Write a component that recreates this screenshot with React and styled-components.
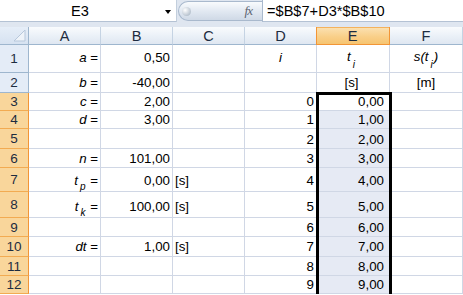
import React from 'react';
import styled, { createGlobalStyle } from 'styled-components';

const GlobalStyle = createGlobalStyle`
  html, body { margin: 0; padding: 0; background: #fff; overflow: hidden; }
  body { font-family: "Liberation Sans", Arial, sans-serif; color: #000; }
`;

const Window = styled.div`
  width: 463px;
  height: 295px;
  overflow: hidden;
  background: #fff;
`;

const TopBar = styled.div`
  display: flex;
  align-items: flex-start;
  height: 27px;
  background: #dfe6f0;
`;

const NameBox = styled.div`
  box-sizing: border-box;
  width: 177px;
  height: 22px;
  display: flex;
  align-items: center;
  justify-content: center;
  padding-right: 16px;
  background: #fff;
  border-right: 1px solid #c3cfdd;
  border-bottom: 1px solid #b4c2d4;
  font-size: 14.6px;
  position: relative;
`;

const Arrow = styled.span`
  position: absolute;
  right: 5px;
  top: 10px;
  width: 0;
  height: 0;
  border-left: 3.5px solid transparent;
  border-right: 3.5px solid transparent;
  border-top: 4px solid #000;
`;

const FxPill = styled.div`
  box-sizing: border-box;
  width: 84px;
  height: 20px;
  margin: 1px 0 0 1px;
  display: flex;
  align-items: center;
  justify-content: space-between;
  padding: 0 10px 0 3px;
  border: 1px solid #a9b9cd;
  border-right: none;
  border-radius: 10px 0 0 10px;
  background: linear-gradient(#f9fbfd, #e2e9f2 50%, #cfd9e6);
`;

const Grip = styled.span`
  width: 9px;
  height: 9px;
  border-radius: 50%;
  background: radial-gradient(circle at 35% 35%, #ffffff, #b9c4d0 70%, #9aa8b8);
`;

const FxLabel = styled.span`
  font-family: "Liberation Serif", "Times New Roman", serif;
  font-style: italic;
  font-size: 13px;
  color: #5c6470;
  letter-spacing: -1px;
`;

const FormulaInput = styled.div`
  box-sizing: border-box;
  flex: 1;
  height: 22px;
  padding-left: 4px;
  background: #fff;
  border-left: 1px solid #a9b9cd;
  border-bottom: 1px solid #b4c2d4;
  font-size: 14.6px;
  line-height: 22px;
  white-space: nowrap;
`;

const Sheet = styled.div`
  display: grid;
  grid-template-columns: 29px 72px 72px 72px 72px 73px 73px;
  grid-template-rows: ${(p) => p.$rows};
`;

const Corner = styled.div`
  box-sizing: border-box;
  grid-column: 1;
  grid-row: 1;
  background: linear-gradient(#e6eef8, #d6e2f1);
  border-right: 1px solid #9eb6ce;
  border-bottom: 1px solid #9eb6ce;
  display: flex;
  align-items: flex-end;
  justify-content: flex-end;
  padding: 0 2px 2px 0;
`;

const ColHead = styled.div`
  box-sizing: border-box;
  grid-column: ${(p) => p.$col};
  grid-row: 1;
  display: flex;
  align-items: center;
  justify-content: center;
  font-size: 14.6px;
  color: #1d2c40;
  background: ${(p) =>
    p.$sel
      ? 'linear-gradient(#fbe2b4, #f9d08a 55%, #f6c471)'
      : 'linear-gradient(#f9fbfd, #eaf0f7 55%, #dfe7f1)'};
  border-right: 1px solid ${(p) => (p.$sel ? '#f29536' : '#c5d3e3')};
  border-bottom: 1px solid ${(p) => (p.$sel ? '#f29536' : '#9eb6ce')};
  ${(p) => p.$sel && 'box-shadow: inset 1px 0 0 #f29536, inset 0 1px 0 #f4b25c; margin-left: -1px;'}
`;

const RowHead = styled.div`
  box-sizing: border-box;
  grid-column: 1;
  grid-row: ${(p) => p.$row};
  display: flex;
  align-items: center;
  justify-content: center;
  font-size: 13.5px;
  color: #1d2c40;
  background: ${(p) => (p.$sel ? '#f9d69b' : '#e4ecf7')};
  border-right: 1px solid ${(p) => (p.$sel ? '#f29536' : '#9eb6ce')};
  border-bottom: 1px solid ${(p) => (p.$sel ? '#f2ab52' : '#9eb6ce')};
`;

const Cell = styled.div`
  box-sizing: border-box;
  grid-column: ${(p) => p.$col};
  grid-row: ${(p) => p.$row};
  display: flex;
  align-items: flex-end;
  justify-content: ${(p) =>
    p.$align === 'left' ? 'flex-start' : p.$align === 'center' ? 'center' : 'flex-end'};
  padding: 0 ${(p) => p.$pr}px ${(p) => p.$pb}px 2px;
  font-size: 13.3px;
  line-height: 15px;
  white-space: nowrap;
  background: ${(p) => (p.$shade ? '#e6eaf4' : '#fff')};
  border-right: 1px solid #d0d7e5;
  border-bottom: 1px solid #d0d7e5;
`;

const Text = styled.span`
  white-space: pre;
`;

const Selection = styled.div`
  box-sizing: border-box;
  grid-column: ${(p) => p.$col};
  grid-row: ${(p) => p.$from} / ${(p) => p.$to};
  margin: -1px -2px 0 -1px;
  border: 3px solid #000;
  border-bottom: none;
  pointer-events: none;
  z-index: 1;
`;

const I = styled.i`
  font-style: italic;
`;

const Sub = styled.span`
  font-size: 10px;
  line-height: 0;
  vertical-align: -${(p) => p.$d}px;
  margin: 0 1px 0 2px;
`;

const cols = ['A', 'B', 'C', 'D', 'E', 'F'];

const rows = [
  {
    h: 28, pb: 7,
    A: <><I>a</I>{' ='}</>, B: '0,50',
    D: { c: <I>i</I>, align: 'center' },
    E: { c: <><I>t</I><Sub $d={7}><I>i</I></Sub></>, align: 'center' },
    F: { c: <I>s(t<Sub $d={7}>i</Sub>)</I>, align: 'center' },
  },
  { h: 20, pb: 2, A: <><I>b</I>{' ='}</>, B: '-40,00', E: { c: '[s]', align: 'center' }, F: { c: '[m]', align: 'center' } },
  { h: 18, pb: 1, A: <><I>c</I>{' ='}</>, B: '2,00', D: '0', E: '0,00' },
  { h: 18, pb: 1, A: <><I>d</I>{' ='}</>, B: '3,00', D: '1', E: '1,00' },
  { h: 20, pb: 1, D: '2', E: '2,00' },
  { h: 19, pb: 1, A: <><I>n</I>{' ='}</>, B: '101,00', D: '3', E: '3,00' },
  { h: 24, pb: 3, A: <><I>t</I><Sub $d={5}><I>p</I></Sub>{' ='}</>, B: '0,00', C: { c: '[s]', align: 'left' }, D: '4', E: '4,00' },
  { h: 26, pb: 3, A: <><I>t</I><Sub $d={5}><I>k</I></Sub>{' ='}</>, B: '100,00', C: { c: '[s]', align: 'left' }, D: '5', E: '5,00' },
  { h: 19, pb: 1, D: '6', E: '6,00' },
  { h: 20, pb: 2, A: <><I>dt</I>{' ='}</>, B: '1,00', C: { c: '[s]', align: 'left' }, D: '7', E: '7,00' },
  { h: 19, pb: 1, D: '8', E: '8,00' },
  { h: 18, pb: 1, D: '9', E: '9,00' },
];

function readCell(v) {
  if (v === undefined) return { c: null, align: 'right' };
  if (typeof v === 'object' && v !== null && 'c' in v) return v;
  return { c: v, align: 'right' };
}

export default function App() {
  const template = ['18px', ...rows.map((r) => `${r.h}px`)].join(' ');

  return (
    <Window>
      <GlobalStyle />
      <TopBar>
        <NameBox>
          E3
          <Arrow />
        </NameBox>
        <FxPill>
          <Grip />
          <FxLabel>fx</FxLabel>
        </FxPill>
        <FormulaInput>=$B$7+D3*$B$10</FormulaInput>
      </TopBar>

      <Sheet $rows={template}>
        <Corner>
          <svg width="12" height="12" viewBox="0 0 12 12">
            <polygon points="11,0 11,11 0,11" fill="#eef3f9" stroke="#b7c7db" strokeWidth="1" />
          </svg>
        </Corner>
        {cols.map((c, ci) => (
          <ColHead key={c} $col={ci + 2} $sel={c === 'E'}>{c}</ColHead>
        ))}

        {rows.map((r, i) => {
          const n = i + 1;
          return (
            <React.Fragment key={n}>
              <RowHead $row={n + 1} $sel={n >= 3}>{n}</RowHead>
              {cols.map((c, ci) => {
                const cell = readCell(r[c]);
                const inSel = c === 'E' && n >= 3;
                return (
                  <Cell
                    key={c}
                    $col={ci + 2}
                    $row={n + 1}
                    $align={cell.align}
                    $pb={r.pb}
                    $pr={c === 'E' ? 5 : 2}
                    $shade={inSel && n > 3}
                  >
                    {cell.c !== null && <Text>{cell.c}</Text>}
                  </Cell>
                );
              })}
            </React.Fragment>
          );
        })}

        <Selection $col={6} $from={4} $to={rows.length + 2} />
      </Sheet>
    </Window>
  );
}
